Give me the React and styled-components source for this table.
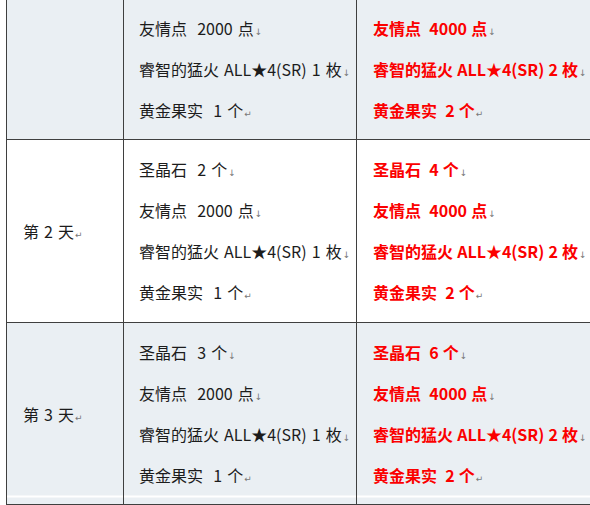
import React from 'react';
import styled, { createGlobalStyle } from 'styled-components';

const Global = createGlobalStyle`
  html, body {
    margin: 0;
    padding: 0;
    background: #ffffff;
  }
`

const Viewport = styled.div`
  width: 590px;
  height: 505px;
  overflow: hidden;
  font-family: "Noto Sans CJK SC", "Noto Sans", sans-serif;
  font-size: 16px;
  color: #1c1c1c;
`

const Table = styled.table`
  border-collapse: collapse;
  table-layout: fixed;
  width: 620px;
  margin-top: -2px;
  margin-left: 6px;
`

const Row = styled.tr``

const Cell = styled.td`
  border: 1px solid #3f3f3f;
  padding: ${p => p.$top}px 0 ${p => p.$bottom}px ${p => p.$pad}px;
  vertical-align: middle;
  white-space: pre;
  word-spacing: 1.5px;
  background: ${p => p.$shade
    ? (p.$band
      ? 'linear-gradient(to bottom, #eaeff3 calc(100% - 9px), #ffffff calc(100% - 9px), #ffffff calc(100% - 7px), #eaeff3 calc(100% - 7px))'
      : '#eaeff3')
    : '#ffffff'};
`

const Line = styled.div`
  line-height: 41px;
  height: 41px;
  color: ${p => p.$red ? '#fb0000' : '#1c1c1c'};
  font-weight: ${p => p.$red ? 700 : 400};
  word-spacing: ${p => p.$red ? '0.5px' : '1.5px'};
`

const Mark = styled.span`
  font-family: "DejaVu Sans", sans-serif;
  font-size: 9px;
  font-weight: 400;
  color: #777777;
  margin-left: 1px;
`

const days = [
  {
    label: '',
    top: 9,
    bottom: 8,
    normal: ['友情点  2000 点', '睿智的猛火 ALL★4(SR) 1 枚', '黄金果实  1 个'],
    double: ['友情点  4000 点', '睿智的猛火 ALL★4(SR) 2 枚', '黄金果实  2 个'],
  },
  {
    label: '第 2 天',
    top: 9,
    bottom: 9,
    normal: ['圣晶石  2 个', '友情点  2000 点', '睿智的猛火 ALL★4(SR) 1 枚', '黄金果实  1 个'],
    double: ['圣晶石  4 个', '友情点  4000 点', '睿智的猛火 ALL★4(SR) 2 枚', '黄金果实  2 个'],
  },
  {
    label: '第 3 天',
    top: 9,
    bottom: 8,
    normal: ['圣晶石  3 个', '友情点  2000 点', '睿智的猛火 ALL★4(SR) 1 枚', '黄金果实  1 个'],
    double: ['圣晶石  6 个', '友情点  4000 点', '睿智的猛火 ALL★4(SR) 2 枚', '黄金果实  2 个'],
  },
]

function Lines({ items, red }) {
  return items.map((t, i) => (
    <Line key={i} $red={red}>
      {t}<Mark>{i === items.length - 1 ? '↵' : '↓'}</Mark>
    </Line>
  ))
}

export default function App() {
  return (
    <Viewport>
      <Global />
      <Table>
        <colgroup>
          <col style={{ width: 117 }} />
          <col style={{ width: 233 }} />
          <col style={{ width: 270 }} />
        </colgroup>
        <tbody>
          {days.map((d, i) => {
            const cell = {
              $shade: i % 2 === 0,
              $band: i === days.length - 1,
              $top: d.top,
              $bottom: d.bottom,
            }
            return (
              <Row key={i}>
                <Cell {...cell} $pad={16}>
                  {d.label && <>{d.label}<Mark>↵</Mark></>}
                </Cell>
                <Cell {...cell} $pad={15}>
                  <Lines items={d.normal} />
                </Cell>
                <Cell {...cell} $pad={16}>
                  <Lines items={d.double} red />
                </Cell>
              </Row>
            )
          })}
        </tbody>
      </Table>
    </Viewport>
  )
}
